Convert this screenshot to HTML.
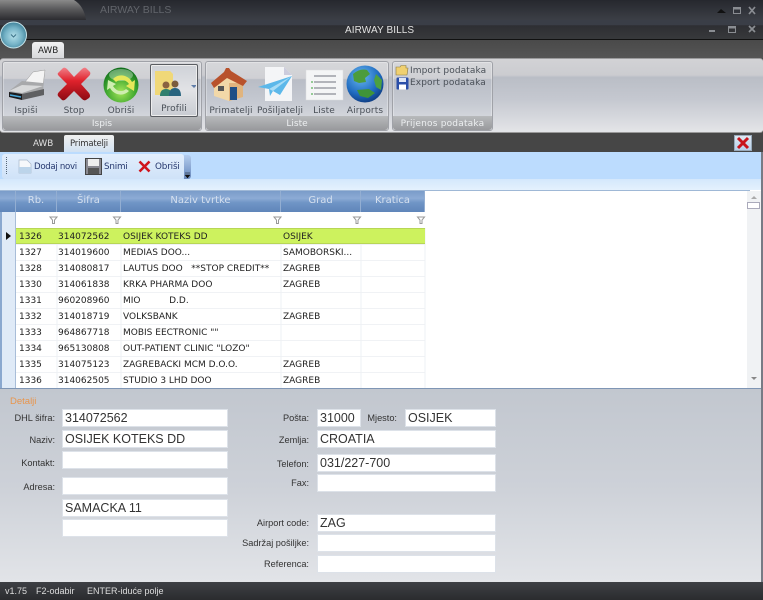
<!DOCTYPE html>
<html><head><meta charset="utf-8">
<style>
html,body{margin:0;padding:0;background:#4a4a4a}
#p{position:relative;width:763px;height:600px;overflow:hidden;font-family:"DejaVu Sans","Liberation Sans",sans-serif;font-size:9px;color:#333;filter:blur(.3px)}
#p div,#p svg,#p span.a{position:absolute;box-sizing:border-box}
.t{white-space:nowrap;line-height:12px}
.rl{font-size:9px;color:#4a5058;text-align:center;white-space:nowrap;line-height:12px;letter-spacing:.1px}
.gl{font-size:9px;color:#eceef0;text-align:center;white-space:nowrap;line-height:12px}
.grp{background:linear-gradient(#d6d7da 0,#cfd0d4 24%,#b9bdc6 26%,#c6cad2 60%,#dfe1e5 100%);border-radius:3px;border:1px solid #a0a2a8;box-shadow:inset 0 0 0 1px rgba(255,255,255,.3)}
.cap{background:linear-gradient(#b8babc,#98999c);left:0;right:0;bottom:0;height:14px;border-radius:0 0 3px 3px}
.h{background:linear-gradient(#7a9cc9 0,#8cabd5 35%,#7095c6 55%,#5f85b9 100%);color:#d5e0ef;font-size:10px;text-align:center;line-height:20px;height:21px;top:191px;border-right:1px solid #93aed2;white-space:nowrap}
.c{font-size:9px;color:#222;line-height:18px;white-space:pre;height:16px}
.inp{background:#fff;border:1px solid #dde2e9;font-family:"Liberation Sans",sans-serif;font-size:12.5px;color:#333;padding-left:2px;line-height:17px;white-space:nowrap;height:18px}
.lb{font-family:"Liberation Sans",sans-serif;font-size:9.2px;color:#333;text-align:right;white-space:nowrap;line-height:12px}
.st{font-family:"Liberation Sans",sans-serif;font-size:9px;color:#ddd;white-space:nowrap;line-height:12px;top:585px}
</style></head><body>
<div id="p">
<!-- top bars -->
<div style="left:0;top:0;width:763px;height:20px;background:linear-gradient(#26282e,#3c3f46)"></div>
<svg style="left:0;top:0" width="90" height="20"><defs><linearGradient id="tb" x1="0" y1="0" x2="0" y2="1"><stop offset="0" stop-color="#8a8a8a"/><stop offset=".45" stop-color="#5a5a5c"/><stop offset="1" stop-color="#2c2c30"/></linearGradient></defs><path d="M0 0H74Q84 6 86 20H0Z" fill="url(#tb)"/></svg>
<div class="t" style="left:100px;top:4px;font-family:'Liberation Sans',sans-serif;font-size:10.5px;color:#62656b">AIRWAY BILLS</div>
<svg style="left:716px;top:5px" width="45" height="12"><path d="M1 8L5 4L10 8Z" fill="#111"/><rect x="17.5" y="2.5" width="7" height="6" fill="none" stroke="#8a8d92"/><rect x="17.5" y="2.5" width="7" height="2" fill="#8a8d92"/><path d="M33 2L39 9M39 2L33 9" stroke="#8a8d92" stroke-width="1.7"/></svg>
<div style="left:0;top:20px;width:763px;height:20px;background:linear-gradient(#3a3e47 0,#3a3e47 25%,#2e2f33 30%,#37383b 95%);border-bottom:1px solid #111"></div>
<div class="t" style="left:345px;top:25px;font-family:'Liberation Sans',sans-serif;font-size:10px;color:#e2e2e2;letter-spacing:.1px">AIRWAY BILLS</div>
<svg style="left:705px;top:23px" width="55" height="12"><rect x="4" y="7" width="6" height="2" fill="#8a8d92"/><rect x="23.5" y="3.5" width="7" height="6" fill="none" stroke="#8a8d92"/><rect x="23.5" y="3.5" width="7" height="2" fill="#8a8d92"/><path d="M44 3L50 9M50 3L44 9" stroke="#8a8d92" stroke-width="1.7"/></svg>
<div style="left:0;top:40px;width:763px;height:18px;background:linear-gradient(#4a4a4a,#555)"></div>
<!-- orb -->
<svg style="left:0;top:21px" width="28" height="28"><defs><radialGradient id="orb" cx=".5" cy=".55" r=".55"><stop offset="0" stop-color="#b4e0ea"/><stop offset=".6" stop-color="#74b2c6"/><stop offset="1" stop-color="#3f8199"/></radialGradient></defs><circle cx="13.5" cy="14" r="13" fill="url(#orb)" stroke="#c8e6ec" stroke-width="1"/><path d="M11 13.5L13.5 16L16 13.5" stroke="#3d7288" fill="none"/></svg>
<!-- AWB tab -->
<div style="left:32px;top:42px;width:32px;height:18px;background:linear-gradient(#f2f2f2,#d4d5d8);border-radius:3px 3px 0 0"></div>
<div class="t" style="left:38px;top:45px;color:#222;font-size:8.8px">AWB</div>
<!-- ribbon -->
<div style="left:0;top:58px;width:763px;height:75px;background:linear-gradient(#d2d2d5 0,#cbccd0 22%,#babec6 25%,#c5c8d0 55%,#e4e5e8 100%);border-top:1px solid #9a9a9c;border-bottom:1px solid #999;border-radius:3px"></div>

<!-- Ispis group -->
<div class="grp" style="left:2px;top:61px;width:200px;height:70px"><div class="cap"></div></div>
<div class="gl" style="left:2px;top:118px;width:200px">Ispis</div>
<svg style="left:8px;top:68px" width="38" height="33"><path d="M17 14L25 4L37 2L35 18Z" fill="#f4f4f4" stroke="#999" stroke-width=".5"/><path d="M1 23L14 13L35 15L36 27L14 32Z" fill="#a8a9ab"/><path d="M1 23L14 17L35 18L14 25Z" fill="#d8d9da"/><path d="M1 24L14 26L14 32L1 29Z" fill="#1c1c1e"/><path d="M14 26L36 21V27L14 32Z" fill="#5e5f61"/><path d="M2 27L13 29" stroke="#4aa8d8" stroke-width="1.5"/></svg>
<svg style="left:56px;top:66px" width="36" height="36"><defs><linearGradient id="xr" x1="0" y1="0" x2="0" y2="1"><stop offset="0" stop-color="#f08088"/><stop offset=".4" stop-color="#e0222c"/><stop offset="1" stop-color="#8c0a12"/></linearGradient></defs><path d="M2 7L7 2Q9 1 11 3L18 11L26 3Q28 1 30 2L34 6Q35 8 33 10L25 18L33 27Q35 30 33 32L30 34Q28 35 26 33L18 25L10 33Q8 35 6 34L2 30Q1 28 3 26L11 18L3 10Q1 8 2 7Z" fill="url(#xr)"/></svg>
<svg style="left:103px;top:67px" width="36" height="36"><defs><radialGradient id="gr" cx=".5" cy=".7" r=".7"><stop offset="0" stop-color="#a5e65a"/><stop offset=".6" stop-color="#3ea72f"/><stop offset="1" stop-color="#0d6a1a"/></radialGradient></defs><circle cx="18" cy="18" r="17.5" fill="url(#gr)"/><ellipse cx="18" cy="8" rx="12" ry="6" fill="#fff" opacity=".35"/><path d="M10 12Q15 7 22 9Q27 11 29 15L32 13L31 24L23 19L26 17Q23 13 19 13Q15 13 13 15Z" fill="#e6e85a"/><path d="M26 24Q21 29 14 27Q9 25 7 21L4 23L5 13L13 17L10 19Q13 24 18 24Q21 24 23 22Z" fill="#cfeeb0"/></svg>
<div style="left:150px;top:64px;width:48px;height:53px;border:1px solid #5a5d62;border-radius:2px;box-shadow:inset 0 0 0 1px #eee;background:linear-gradient(#cfd2d8,#e2e3e6 50%,#c8ccd2)"></div>
<svg style="left:154px;top:69px" width="42" height="28"><path d="M1 2H16L19 5V26H1Z" fill="#f0d878"/><circle cx="12" cy="16" r="3.5" fill="#8a6240"/><path d="M6 27Q6 20 12 20Q18 20 18 27Z" fill="#2f7f6e"/><circle cx="21" cy="15" r="3.5" fill="#7a5c3c"/><path d="M15 27Q15 19 21 19Q27 19 27 27Z" fill="#28647f"/><path d="M37 16H43L40 19Z" fill="#5f7da8"/></svg>
<div class="rl" style="left:6px;top:105px;width:40px">Ispiši</div>
<div class="rl" style="left:54px;top:105px;width:40px">Stop</div>
<div class="rl" style="left:101px;top:105px;width:40px">Obriši</div>
<div class="rl" style="left:154px;top:103px;width:40px">Profili</div>

<!-- Liste group -->
<div class="grp" style="left:205px;top:61px;width:184px;height:70px"><div class="cap"></div></div>
<div class="gl" style="left:205px;top:118px;width:184px">Liste</div>
<svg style="left:210px;top:66px" width="38" height="36"><path d="M4 18L19 6L33 18V31L19 35L4 30Z" fill="#f2d8a8"/><path d="M19 17L33 17V31L19 35Z" fill="#e0b47e"/><path d="M1 17L14 6L16 2H19L21 5L37 15L33 20L17 12L4 22Z" fill="#b8522c"/><rect x="8" y="20" width="6" height="5" fill="#555"/><rect x="20" y="21" width="7" height="13" fill="#1f4f86"/></svg>
<svg style="left:258px;top:66px" width="36" height="36"><path d="M7 1H26L34 9V35H7Z" fill="#f4f5f7"/><path d="M26 1V9H34Z" fill="#ccd"/><path d="M0 21L34 10L22 29L15 25L12 30L11 23Z" fill="#5cb8ea"/><path d="M11 23L34 10L15 25Z" fill="#a8dcf6"/></svg>
<svg style="left:305px;top:69px" width="39" height="32"><rect x="1" y="1" width="37" height="30" fill="#f4f5f6" stroke="#dcdde0" stroke-width=".5"/><path d="M9 7H31M9 13H31M9 19H31M9 25H31" stroke="#8a8e96" stroke-width="1.2"/><path d="M6 13h2M6 19h2M6 25h2" stroke="#5cb05c" stroke-width="1.2"/></svg>
<svg style="left:346px;top:65px" width="38" height="38"><defs><radialGradient id="gb" cx=".4" cy=".3" r=".8"><stop offset="0" stop-color="#69b8f0"/><stop offset=".6" stop-color="#1f6bc0"/><stop offset="1" stop-color="#0a2f70"/></radialGradient></defs><circle cx="19" cy="19" r="18.5" fill="url(#gb)"/><path d="M7 9Q14 3 21 5L24 9L19 13L20 17L13 18L8 16Z" fill="#4c9c3c"/><path d="M30 9L36 15L35 25L30 22L28 15Z" fill="#4ca040"/><path d="M11 25L23 24L29 28L22 33L14 31Z" fill="#3f9438"/></svg>
<div class="rl" style="left:207px;top:105px;width:48px">Primatelji</div>
<div class="rl" style="left:255px;top:105px;width:50px">Pošiljatelji</div>
<div class="rl" style="left:304px;top:105px;width:40px">Liste</div>
<div class="rl" style="left:344px;top:105px;width:42px">Airports</div>

<!-- Prijenos group -->
<div class="grp" style="left:392px;top:61px;width:101px;height:70px"><div class="cap"></div></div>
<div class="gl" style="left:392px;top:118px;width:101px;letter-spacing:.2px">Prijenos podataka</div>
<svg style="left:395px;top:64px" width="14" height="12"><path d="M1 3H5L6 1.5H11V4H13L12 11H1Z" fill="#f0d070" stroke="#8a7a40" stroke-width=".6"/></svg>
<svg style="left:396px;top:77px" width="13" height="13"><rect x="0.5" y="0.5" width="12" height="12" rx="1" fill="#2a4ea8"/><rect x="3" y="1" width="7" height="4" fill="#dfe6f5"/><rect x="3" y="7.5" width="7" height="5" fill="#fff"/></svg>
<div class="rl" style="left:410px;top:65px;text-align:left">Import podataka</div>
<div class="rl" style="left:410px;top:77px;text-align:left">Export podataka</div>

<!-- secondary tab strip -->
<div style="left:0;top:133px;width:763px;height:19px;background:#464646"></div>
<div class="t" style="left:33px;top:138px;color:#e0e0e0;font-size:8.8px">AWB</div>
<div style="left:64px;top:135px;width:50px;height:17px;background:linear-gradient(#f0f0f0,#d2e2f2);border-radius:2px 2px 0 0"></div>
<div class="t" style="left:70px;top:138px;color:#333;font-size:8.5px;letter-spacing:-.2px">Primatelji</div>
<div style="left:734px;top:135px;width:18px;height:16px;background:linear-gradient(#dfe8f2,#b8d0ea);border:1px solid #9ab"></div>
<svg style="left:736px;top:136px" width="14" height="14"><path d="M2 2L12 12M12 2L2 12" stroke="#c8141c" stroke-width="3"/></svg>

<!-- toolbar -->
<div style="left:0;top:152px;width:763px;height:27px;background:#bcdcfe"></div>
<div style="left:0;top:179px;width:763px;height:12px;background:linear-gradient(#d4e8fc,#e6f2fd)"></div>
<div style="left:2px;top:154px;width:182px;height:25px;background:linear-gradient(#e2eefc,#cfe2f8);border-radius:3px"></div>
<div style="left:184px;top:155px;width:7px;height:24px;background:linear-gradient(#b4cdee,#7d9ccb 70%,#6a88b8);border-radius:0 3px 3px 0"></div>
<svg style="left:184px;top:171px" width="7" height="8"><path d="M1 2H6M1 4H6L3.5 7Z" fill="#111" stroke="#111" stroke-width=".5"/></svg>
<div style="left:6px;top:157px;width:1px;height:17px;border-left:1px dotted #567"></div>
<svg style="left:18px;top:159px" width="14" height="15"><path d="M1 1H9L13 5V14H1Z" fill="#f6f8fb" stroke="#a8b8cc" stroke-width=".7"/><path d="M1 8H13V14H1Z" fill="#bcd4ea"/></svg>
<div class="t" style="left:34px;top:161px;font-size:8.6px;color:#26386e;letter-spacing:-.3px">Dodaj novi</div>
<svg style="left:85px;top:158px" width="17" height="17"><rect x=".5" y=".5" width="16" height="16" fill="#8a8a92" stroke="#444"/><rect x="3" y="1" width="11" height="7" fill="#eee"/><rect x="3" y="10" width="11" height="6" fill="#555"/></svg>
<div class="t" style="left:104px;top:161px;font-size:8.8px;color:#26386e;letter-spacing:-.2px">Snimi</div>
<svg style="left:138px;top:160px" width="13" height="13"><path d="M1.5 1.5L11.5 11.5M11.5 1.5L1.5 11.5" stroke="#d0141c" stroke-width="2.6"/></svg>
<div class="t" style="left:155px;top:161px;font-size:8.8px;color:#26386e;letter-spacing:-.15px">Obriši</div>

<!-- grid -->
<div style="left:0;top:190px;width:763px;height:198px;background:#fff"></div>
<div style="left:0;top:190px;width:750px;height:1px;background:#9fb8d6"></div>
<div style="left:0;top:191px;width:2px;height:197px;background:#8aa8cf"></div>
<div style="left:2px;top:212px;width:14px;height:176px;background:#dfeaf7;border-right:1px solid #a8bdd8"></div>
<div class="h" style="left:0;width:16px"></div>
<div class="h" style="left:16px;width:41px">Rb.</div>
<div class="h" style="left:57px;width:64px">Šifra</div>
<div class="h" style="left:121px;width:160px">Naziv tvrtke</div>
<div class="h" style="left:281px;width:80px">Grad</div>
<div class="h" style="left:361px;width:64px">Kratica</div>
<svg style="left:0;top:212px" width="430" height="16"><g fill="none" stroke="#999" stroke-width="1"><path d="M50 5H57L54.5 8V11.5H52.5V8Z"/><path d="M113.5 5H120.5L118 8V11.5H116V8Z"/><path d="M274 5H281L278.5 8V11.5H276.5V8Z"/><path d="M353.5 5H360.5L358 8V11.5H356V8Z"/><path d="M417.5 5H424.5L422 8V11.5H420V8Z"/></g></svg>
<!-- grid lines -->
<svg style="left:0;top:228px" width="430" height="160"><g stroke="#f0f2f5"><path d="M16 32.5H425M16 48.5H425M16 64.5H425M16 80.5H425M16 96.5H425M16 112.5H425M16 128.5H425M16 144.5H425M16 16.5H425"/><path d="M57 0V160M121 0V160M281 0V160M361 0V160M425 0V160" stroke="#eef0f4"/></g></svg>
<div style="left:16px;top:228px;width:409px;height:16px;background:#cdf25e;border-top:1px solid #b8d656;border-bottom:1px solid #b8d656"></div>
<svg style="left:5px;top:232px" width="7" height="9"><path d="M1 0L6 4L1 8Z" fill="#111"/></svg>

<div class="c" style="left:19px;top:228px">1326</div><div class="c" style="left:58px;top:228px">314072562</div><div class="c" style="left:123px;top:228px">OSIJEK KOTEKS DD</div><div class="c" style="left:283px;top:228px">OSIJEK</div>
<div class="c" style="left:19px;top:244px">1327</div><div class="c" style="left:58px;top:244px">314019600</div><div class="c" style="left:123px;top:244px">MEDIAS DOO...</div><div class="c" style="left:283px;top:244px">SAMOBORSKI...</div>
<div class="c" style="left:19px;top:260px">1328</div><div class="c" style="left:58px;top:260px">314080817</div><div class="c" style="left:123px;top:260px">LAUTUS DOO   **STOP CREDIT**</div><div class="c" style="left:283px;top:260px">ZAGREB</div>
<div class="c" style="left:19px;top:276px">1330</div><div class="c" style="left:58px;top:276px">314061838</div><div class="c" style="left:123px;top:276px">KRKA PHARMA DOO</div><div class="c" style="left:283px;top:276px">ZAGREB</div>
<div class="c" style="left:19px;top:292px">1331</div><div class="c" style="left:58px;top:292px">960208960</div><div class="c" style="left:123px;top:292px">MIO          D.D.</div>
<div class="c" style="left:19px;top:308px">1332</div><div class="c" style="left:58px;top:308px">314018719</div><div class="c" style="left:123px;top:308px">VOLKSBANK</div><div class="c" style="left:283px;top:308px">ZAGREB</div>
<div class="c" style="left:19px;top:324px">1333</div><div class="c" style="left:58px;top:324px">964867718</div><div class="c" style="left:123px;top:324px">MOBIS EECTRONIC ""</div>
<div class="c" style="left:19px;top:340px">1334</div><div class="c" style="left:58px;top:340px">965130808</div><div class="c" style="left:123px;top:340px">OUT-PATIENT CLINIC "LOZO"</div>
<div class="c" style="left:19px;top:356px">1335</div><div class="c" style="left:58px;top:356px">314075123</div><div class="c" style="left:123px;top:356px">ZAGREBACKI MCM D.O.O.</div><div class="c" style="left:283px;top:356px">ZAGREB</div>
<div class="c" style="left:19px;top:372px">1336</div><div class="c" style="left:58px;top:372px">314062505</div><div class="c" style="left:123px;top:372px">STUDIO 3 LHD DOO</div><div class="c" style="left:283px;top:372px">ZAGREB</div>

<!-- scrollbar -->
<div style="left:747px;top:191px;width:14px;height:197px;background:#f0f2f4"></div>
<svg style="left:747px;top:191px" width="14" height="197"><path d="M4 8L7 5L10 8Z" fill="#aaa"/><rect x=".5" y="11.5" width="12" height="6" fill="#fff" stroke="#aab"/><path d="M4 186L7 189L10 186Z" fill="#888"/></svg>
<div style="left:761px;top:152px;width:2px;height:430px;background:#777b85"></div>

<!-- detail panel -->
<div style="left:0;top:388px;width:761px;height:194px;background:linear-gradient(#c2c7cf,#cdd1d8 50%,#e2e4e8);border-top:1px solid #7f96b5"></div>
<div class="t" style="left:10px;top:396px;font-family:'Liberation Sans',sans-serif;font-size:9.5px;color:#e8954c">Detalji</div>

<div class="lb" style="left:0;top:412px;width:55px">DHL šifra:</div>
<div class="inp" style="left:62px;top:409px;width:166px">314072562</div>
<div class="lb" style="left:0;top:434px;width:55px">Naziv:</div>
<div class="inp" style="left:62px;top:430px;width:166px">OSIJEK KOTEKS DD</div>
<div class="lb" style="left:0;top:457px;width:55px">Kontakt:</div>
<div class="inp" style="left:62px;top:451px;width:166px"></div>
<div class="lb" style="left:0;top:481px;width:55px">Adresa:</div>
<div class="inp" style="left:62px;top:477px;width:166px"></div>
<div class="inp" style="left:62px;top:499px;width:166px">SAMACKA 11</div>
<div class="inp" style="left:62px;top:519px;width:166px"></div>

<div class="lb" style="left:250px;top:412px;width:59px">Pošta:</div>
<div class="inp" style="left:317px;top:409px;width:44px">31000</div>
<div class="lb" style="left:360px;top:412px;width:37px">Mjesto:</div>
<div class="inp" style="left:405px;top:409px;width:91px">OSIJEK</div>
<div class="lb" style="left:250px;top:434px;width:59px">Zemlja:</div>
<div class="inp" style="left:317px;top:430px;width:179px">CROATIA</div>
<div class="lb" style="left:250px;top:458px;width:59px">Telefon:</div>
<div class="inp" style="left:317px;top:454px;width:179px">031/227-700</div>
<div class="lb" style="left:250px;top:477px;width:59px">Fax:</div>
<div class="inp" style="left:317px;top:474px;width:179px"></div>
<div class="lb" style="left:230px;top:517px;width:79px">Airport code:</div>
<div class="inp" style="left:317px;top:514px;width:179px">ZAG</div>
<div class="lb" style="left:230px;top:537px;width:79px">Sadržaj pošiljke:</div>
<div class="inp" style="left:317px;top:534px;width:179px"></div>
<div class="lb" style="left:230px;top:558px;width:79px">Referenca:</div>
<div class="inp" style="left:317px;top:555px;width:179px"></div>

<!-- status -->
<div style="left:0;top:582px;width:763px;height:18px;background:linear-gradient(#3e4045,#2a2b2e)"></div>
<div class="st" style="left:5px">v1.75</div>
<div class="st" style="left:36px">F2-odabir</div>
<div class="st" style="left:87px">ENTER-iduće polje</div>
</div>
</body></html>
